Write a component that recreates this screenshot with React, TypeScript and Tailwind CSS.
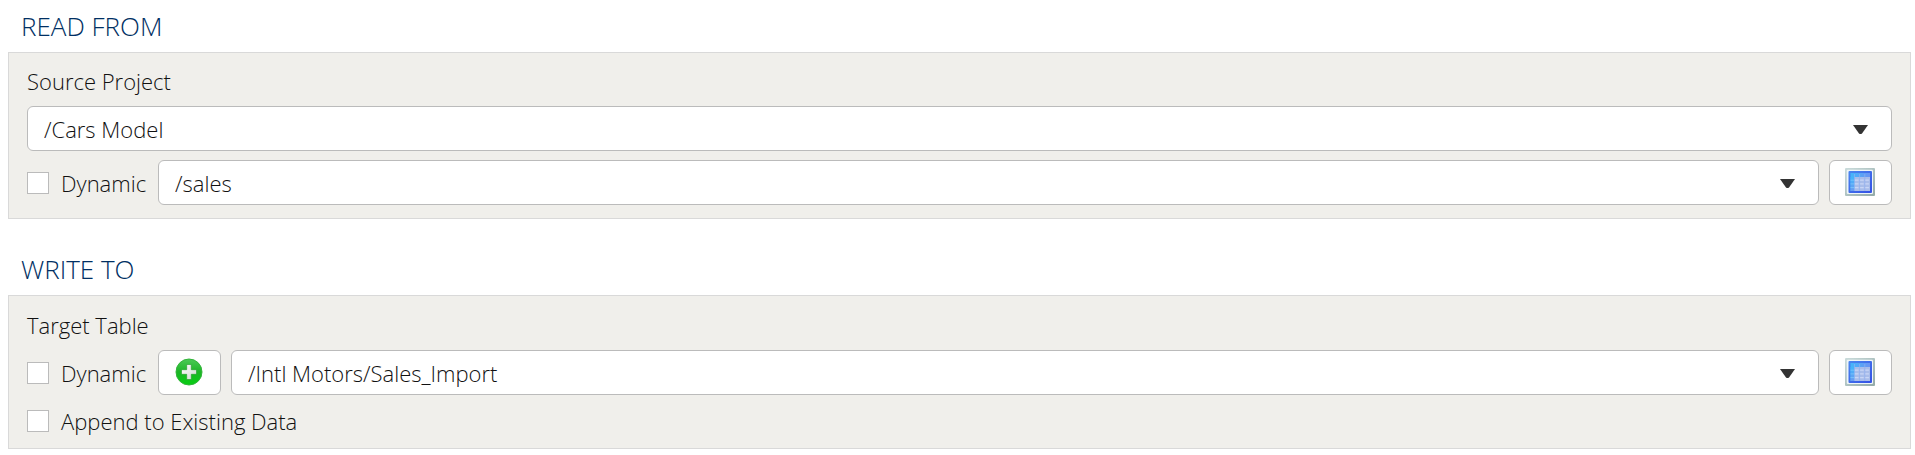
import { useId, useState, type ReactNode } from "react";

const controlBox = "h-[45px] rounded-md border border-[#bbbbbb] bg-white";

function Section({ title, children }: { title: string; children: ReactNode }) {
  return (
    <section>
      <h2 className="flex h-[52px] items-center pl-[13px] text-[26px] font-light text-[#002f63]">{title}</h2>
      <div className="border border-[#d9d9d9] bg-[#f0efeb] px-[18px] pb-[13px]">{children}</div>
    </section>
  );
}

function Dropdown({ id, label, options }: { id?: string; label?: string; options: string[] }) {
  return (
    <div className="relative min-w-0 flex-1">
      <select
        id={id}
        aria-label={label}
        className={`${controlBox} block w-full appearance-none pt-px pr-12 pl-4 text-[22px] font-light text-[#111111]`}
      >
        {options.map((o) => (
          <option key={o}>{o}</option>
        ))}
      </select>
      <svg
        className="pointer-events-none absolute top-[19px] right-6 h-[9px] w-[15px]"
        viewBox="0 0 15 9"
        aria-hidden="true"
      >
        <path d="M0 0H15L9 8.4Q7.5 9.4 6 8.4Z" fill="#333333" />
      </svg>
    </div>
  );
}

function Check({ label }: { label: string }) {
  const id = useId();
  const [on, setOn] = useState(false);
  return (
    <div className="flex min-w-[121px] items-center gap-3">
      <input
        id={id}
        type="checkbox"
        checked={on}
        onChange={(e) => setOn(e.target.checked)}
        className="size-[22px] shrink-0 appearance-none border border-[#bbbbbb] bg-white checked:bg-[#2f6fed]"
      />
      <label htmlFor={id} className="whitespace-nowrap">
        {label}
      </label>
    </div>
  );
}

function GridIcon() {
  return (
    <svg className="h-7 w-[30px]" viewBox="0 0 30 28" aria-hidden="true">
      <defs>
        <linearGradient id="frame" x1="0" y1="0" x2="1" y2="1">
          <stop offset="0" stopColor="#cbdcdc" />
          <stop offset="1" stopColor="#93aaa8" />
        </linearGradient>
        <linearGradient id="edge" x1="0" y1="0" x2="1" y2="1">
          <stop offset="0" stopColor="#4a86f0" />
          <stop offset="1" stopColor="#3350e4" />
        </linearGradient>
        <linearGradient id="head" x1="0" y1="0" x2="1" y2="0">
          <stop offset="0" stopColor="#43b5fa" />
          <stop offset="1" stopColor="#6b94f2" />
        </linearGradient>
        <linearGradient id="side" x1="0" y1="0" x2="0" y2="1">
          <stop offset="0" stopColor="#43b5fa" />
          <stop offset="1" stopColor="#6b9cf2" />
        </linearGradient>
      </defs>
      <rect width="30" height="28" rx="1" fill="url(#frame)" />
      <rect x="1.8" y="1.8" width="26.2" height="24.2" rx="1" fill="#eef5f8" />
      <rect x="3.5" y="3" width="23.5" height="22" rx="1" fill="url(#edge)" />
      <rect x="5.5" y="5" width="19.5" height="18" fill="url(#head)" />
      <rect x="5.5" y="9" width="4" height="14" fill="url(#side)" />
      <rect x="9.5" y="9" width="15.5" height="14" fill="#a9bdea" />
      <path
        d="M9.5 12.2H25M9.5 15.9H25M9.5 19.6H25"
        stroke="#c9d6f6"
        strokeWidth="1.2"
        strokeDasharray="4 1.2"
      />
      <path d="M9.5 6V23M14.6 6V23M19.8 6V23" stroke="#8fb0f2" strokeWidth="0.7" />
      <path d="M5.5 12.2H9.5M5.5 15.9H9.5M5.5 19.6H9.5" stroke="#7fc8fb" strokeWidth="0.8" />
    </svg>
  );
}

function AddIcon() {
  return (
    <svg className="size-7" viewBox="0 0 28 28" aria-hidden="true">
      <defs>
        <linearGradient id="ball" x1="0" y1="0" x2="0" y2="1">
          <stop offset="0" stopColor="#4cc956" />
          <stop offset="0.5" stopColor="#1cb526" />
          <stop offset="1" stopColor="#06cf12" />
        </linearGradient>
        <linearGradient id="cross" x1="0" y1="0" x2="1" y2="1">
          <stop offset="0" stopColor="#ffffff" />
          <stop offset="1" stopColor="#cfd8cf" />
        </linearGradient>
      </defs>
      <circle cx="14" cy="14" r="13" fill="url(#ball)" stroke="#32b53a" />
      <path
        d="M11.7 6.5H16.3V11.7H21.5V16.3H16.3V21.5H11.7V16.3H6.5V11.7H11.7Z"
        fill="url(#cross)"
        stroke="#1c9c25"
        strokeWidth="0.6"
      />
    </svg>
  );
}

function IconButton({ label, children }: { label: string; children: ReactNode }) {
  return (
    <button
      type="button"
      aria-label={label}
      className={`${controlBox} flex w-[63px] shrink-0 items-center justify-center pr-px pb-px`}
    >
      {children}
    </button>
  );
}

export default function App() {
  return (
    <main className="bg-white pr-1 pl-2 font-['Open_Sans','Noto_Sans',sans-serif] text-[22px] leading-7 font-light text-[#111111]">
      <div className="flex flex-col gap-6">
        <Section title="READ FROM">
          <label htmlFor="source-project" className="flex h-[53px] items-center pt-0.5">
            Source Project
          </label>
          <div className="flex">
            <Dropdown id="source-project" options={["/Cars Model"]} />
          </div>
          <div className="mt-[9px] flex items-center gap-[10px]">
            <Check label="Dynamic" />
            <Dropdown label="Source table" options={["/sales"]} />
            <IconButton label="View source table">
              <GridIcon />
            </IconButton>
          </div>
        </Section>
        <Section title="WRITE TO">
          <label htmlFor="target-table" className="flex h-[54px] items-center pt-1">
            Target Table
          </label>
          <div className="flex items-center gap-[10px]">
            <Check label="Dynamic" />
            <IconButton label="Add target table">
              <AddIcon />
            </IconButton>
            <Dropdown id="target-table" options={["/Intl Motors/Sales_Import"]} />
            <IconButton label="View target table">
              <GridIcon />
            </IconButton>
          </div>
          <div className="mt-3 flex">
            <Check label="Append to Existing Data" />
          </div>
        </Section>
      </div>
    </main>
  );
}
